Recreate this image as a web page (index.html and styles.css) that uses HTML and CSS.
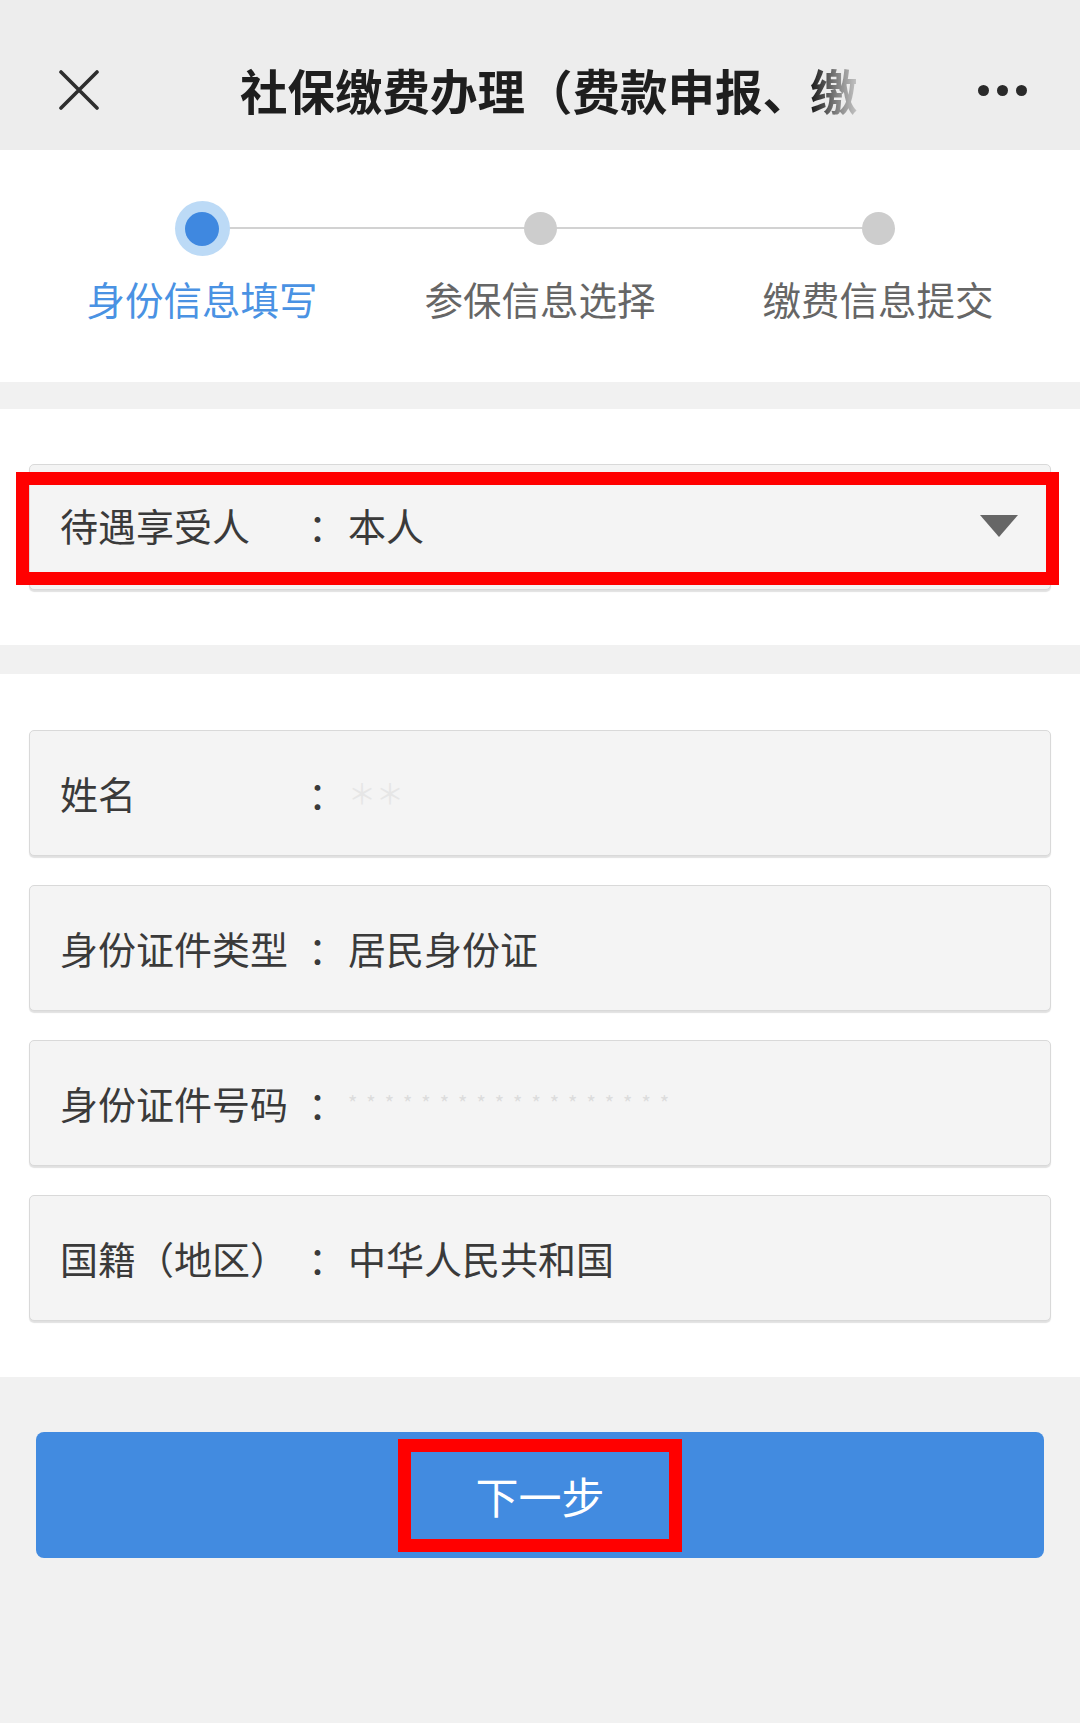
FILE: index.html
```html
<!DOCTYPE html>
<html lang="zh-CN">
<head>
<meta charset="utf-8">
<title>社保缴费办理</title>
<link rel="stylesheet" href="styles.css">
</head>
<body>
<div class="page">
  <header class="topbar">
    <span class="close" aria-label="关闭">
      <svg width="40" height="40" viewBox="0 0 40 40"><path d="M2 2 L38 38 M38 2 L2 38" stroke="#2e2e2e" stroke-width="3.6" stroke-linecap="round" fill="none"/></svg>
    </span>
    <div class="title">社保缴费办理（费款申报、缴</div>
    <span class="more"><i></i><i></i><i></i></span>
  </header>

  <section class="steps">
    <div class="step active"><span class="node"></span><span class="step-label">身份信息填写</span></div>
    <div class="step"><span class="node"></span><span class="step-label">参保信息选择</span></div>
    <div class="step"><span class="node"></span><span class="step-label">缴费信息提交</span></div>
  </section>

  <section class="block select-block">
    <div class="field select highlight">
      <span class="label">待遇享受人</span><span class="colon">：</span><span class="value">本人</span>
      <span class="caret"></span>
    </div>
  </section>

  <section class="block fields">
    <div class="field"><span class="label">姓名</span><span class="colon">：</span><span class="value masked-name">＊＊</span></div>
    <div class="field"><span class="label">身份证件类型</span><span class="colon">：</span><span class="value">居民身份证</span></div>
    <div class="field"><span class="label">身份证件号码</span><span class="colon">：</span><span class="value masked-id">******************</span></div>
    <div class="field"><span class="label">国籍（地区）</span><span class="colon">：</span><span class="value">中华人民共和国</span></div>
  </section>

  <footer class="actions">
    <button class="next" type="button"><span class="next-text">下一步</span></button>
  </footer>
</div>
</body>
</html>
```

FILE: styles.css
```css
html, body {
  margin: 0;
  padding: 0;
}
body {
  background: #f1f1f1;
  font-family: "Noto Sans CJK SC", "Noto Sans", sans-serif;
  color: #333;
}
.page {
  width: 1080px;
  min-height: 1723px;
  background: #f1f1f1;
}

/* top bar */
.topbar {
  height: 150px;
  box-sizing: border-box;
  padding-top: 30px;
  background: #ededed;
  display: flex;
  align-items: center;
}
.close {
  width: 40px;
  height: 40px;
  margin-left: 59px;
  display: flex;
}
.title {
  margin-left: 141px;
  white-space: nowrap;
  font-size: 47.5px;
  font-weight: 700;
  color: #1e1e1e;
  line-height: 60px;
  -webkit-mask-image: linear-gradient(to right, #000 572px, rgba(0,0,0,0.5) 598px, rgba(0,0,0,0.15) 620px);
  mask-image: linear-gradient(to right, #000 572px, rgba(0,0,0,0.5) 598px, rgba(0,0,0,0.15) 620px);
}
.more {
  margin-left: auto;
  margin-right: 53px;
  display: flex;
  gap: 8px;
}
.more i {
  width: 11px;
  height: 11px;
  border-radius: 50%;
  background: #2a2a2a;
}

/* stepper */
.steps {
  background: #fff;
  display: grid;
  grid-template-columns: repeat(3, 1fr);
  padding: 51px 33px 61px;
}
.step {
  position: relative;
  display: flex;
  flex-direction: column;
  align-items: center;
}
.step:not(:last-child)::after {
  content: "";
  position: absolute;
  left: 50%;
  width: 100%;
  top: 26px;
  height: 2px;
  background: #d2d2d2;
}
.node {
  position: relative;
  z-index: 1;
  width: 55px;
  height: 55px;
  display: flex;
  align-items: center;
  justify-content: center;
}
.node::before {
  content: "";
  width: 33px;
  height: 33px;
  border-radius: 50%;
  background: #cdcdcd;
}
.step.active .node {
  border-radius: 50%;
  background: #bcdaf6;
}
.step.active .node::before {
  width: 34px;
  height: 34px;
  background: #3f88e0;
}
.step-label {
  margin-top: 19px;
  font-size: 38.5px;
  line-height: 46px;
  color: #666;
}
.step.active .step-label {
  color: #4a92e3;
}

/* white blocks */
.block {
  background: #fff;
  margin-top: 27px;
  padding: 55px 29px;
}
.fields {
  margin-top: 29px;
  padding-top: 56px;
  padding-bottom: 56px;
  display: flex;
  flex-direction: column;
  gap: 29px;
}
.field {
  position: relative;
  height: 126px;
  box-sizing: border-box;
  padding: 0 32px 0 30px;
  display: flex;
  align-items: center;
  background: #f4f4f4;
  border: 1px solid #d9d9d9;
  border-radius: 5px;
  box-shadow: 0 2px 1px rgba(0, 0, 0, 0.12);
  font-size: 38px;
  line-height: 50px;
  color: #3a3a3a;
}
.select {
  padding-bottom: 4px;
}
.label {
  width: 248px;
  flex: none;
  white-space: nowrap;
}
.colon {
  width: 30px;
  flex: none;
}
.value {
  margin-left: 10px;
  white-space: nowrap;
}
.masked-name {
  color: #e6e6e6;
  font-size: 28px;
}
.masked-id {
  color: #dcdcdc;
  font-size: 20px;
  letter-spacing: 9px;
}
.caret {
  margin-left: auto;
  margin-top: 2px;
  width: 0;
  height: 0;
  border-left: 19px solid transparent;
  border-right: 19px solid transparent;
  border-top: 22px solid #666;
}

/* annotation highlight boxes */
.highlight::after {
  content: "";
  position: absolute;
  top: 7px;
  bottom: 4px;
  left: -14px;
  right: -9px;
  border: 13px solid #ff0000;
}

/* action area */
.actions {
  padding: 55px 36px 0;
}
.next {
  width: 100%;
  height: 126px;
  border: none;
  border-radius: 8px;
  background: #428be0;
  color: #fff;
  font-family: "Noto Sans CJK SC", "Noto Sans", sans-serif;
  font-size: 43px;
  display: flex;
  align-items: center;
  justify-content: center;
  padding: 0;
}
.next-text {
  position: relative;
  line-height: 56px;
}
.next-text::after {
  content: "";
  position: absolute;
  left: calc(50% - 142px);
  top: calc(50% - 56px);
  width: 284px;
  height: 113px;
  box-sizing: border-box;
  border: 13px solid #ff0000;
}
```
